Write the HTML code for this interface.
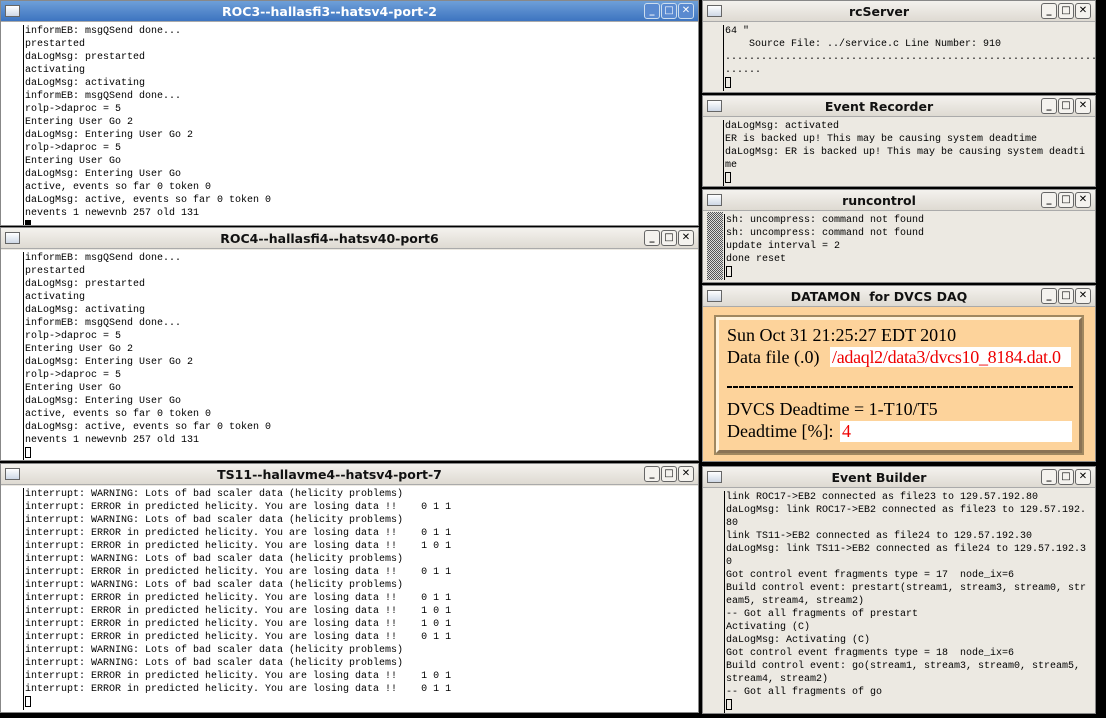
<!DOCTYPE html><html><head><style>
*{margin:0;padding:0;box-sizing:border-box}
body{width:1106px;height:718px;background:#000;position:relative;overflow:hidden;font-family:"Liberation Mono",monospace}
.w{position:absolute;background:#ece9e2;border:1px solid #888}
.t{position:absolute;left:0;right:0;top:0;height:21px;background:linear-gradient(#f4f2ee,#dedad2);font:bold 12.5px "DejaVu Sans",sans-serif;color:#111;line-height:21px;border-bottom:1px solid #aaa}
.t b{position:absolute;left:22px;right:62px;text-align:center}
.t.a{background:linear-gradient(#6e9fd8,#3d74c0);color:#fff}
.ic{position:absolute;left:4px;top:4px;width:15px;height:12px;border:1px solid #666;background:linear-gradient(#fff,#cfd8e6)}
.bt{position:absolute;top:2px;right:4px;display:flex;gap:1px}
.bt span{width:16px;height:16px;border:1px solid #666;border-radius:3px;background:#f4f2ee;font:bold 10px "DejaVu Sans",sans-serif;line-height:14px;text-align:center;color:#000}
.a .bt span{background:#5a8ad0;border-color:#cde;color:#fff}
.c{position:absolute;left:0;right:0;bottom:0;overflow:hidden}
.c pre{position:absolute;left:22px;top:2px;font:10px/13px "Liberation Mono",monospace;color:#000;border-left:1px solid #000;padding-left:1px;white-space:pre}
.sb{position:absolute;left:4px;top:0;bottom:0;width:16px}
.cur{display:inline-block;width:6px;height:11px;border:1px solid #000;vertical-align:-2px}
</style></head><body>

<div class="w" style="left:0;top:0;width:699px;height:226px;background:#fff">
<div class="t a"><div class="ic"></div><b>ROC3--hallasfi3--hatsv4-port-2</b><div class="bt"><span>_</span><span>□</span><span>✕</span></div></div>
<div class="c" style="top:22px;background:#fff"><pre>informEB: msgQSend done...
prestarted
daLogMsg: prestarted
activating
daLogMsg: activating
informEB: msgQSend done...
rolp->daproc = 5
Entering User Go 2
daLogMsg: Entering User Go 2
rolp->daproc = 5
Entering User Go
daLogMsg: Entering User Go
active, events so far 0 token 0
daLogMsg: active, events so far 0 token 0
nevents 1 newevnb 257 old 131
<span style="display:inline-block;width:6px;height:8px;background:#000"></span></pre></div></div>

<div class="w" style="left:0;top:227px;width:699px;height:234px">
<div class="t"><div class="ic"></div><b>ROC4--hallasfi4--hatsv40-port6</b><div class="bt"><span>_</span><span>□</span><span>✕</span></div></div>
<div class="c" style="top:22px;background:#fff"><pre>informEB: msgQSend done...
prestarted
daLogMsg: prestarted
activating
daLogMsg: activating
informEB: msgQSend done...
rolp->daproc = 5
Entering User Go 2
daLogMsg: Entering User Go 2
rolp->daproc = 5
Entering User Go
daLogMsg: Entering User Go
active, events so far 0 token 0
daLogMsg: active, events so far 0 token 0
nevents 1 newevnb 257 old 131
<span class="cur"></span></pre></div></div>

<div class="w" style="left:0;top:463px;width:699px;height:250px">
<div class="t"><div class="ic"></div><b>TS11--hallavme4--hatsv4-port-7</b><div class="bt"><span>_</span><span>□</span><span>✕</span></div></div>
<div class="c" style="top:22px;background:#fff"><pre>interrupt: WARNING: Lots of bad scaler data (helicity problems)
interrupt: ERROR in predicted helicity. You are losing data !!    0 1 1
interrupt: WARNING: Lots of bad scaler data (helicity problems)
interrupt: ERROR in predicted helicity. You are losing data !!    0 1 1
interrupt: ERROR in predicted helicity. You are losing data !!    1 0 1
interrupt: WARNING: Lots of bad scaler data (helicity problems)
interrupt: ERROR in predicted helicity. You are losing data !!    0 1 1
interrupt: WARNING: Lots of bad scaler data (helicity problems)
interrupt: ERROR in predicted helicity. You are losing data !!    0 1 1
interrupt: ERROR in predicted helicity. You are losing data !!    1 0 1
interrupt: ERROR in predicted helicity. You are losing data !!    1 0 1
interrupt: ERROR in predicted helicity. You are losing data !!    0 1 1
interrupt: WARNING: Lots of bad scaler data (helicity problems)
interrupt: WARNING: Lots of bad scaler data (helicity problems)
interrupt: ERROR in predicted helicity. You are losing data !!    1 0 1
interrupt: ERROR in predicted helicity. You are losing data !!    0 1 1
<span class="cur"></span></pre></div></div>

<div class="w" style="left:702px;top:0;width:394px;height:93px">
<div class="t"><div class="ic"></div><b>rcServer</b><div class="bt"><span>_</span><span>□</span><span>✕</span></div></div>
<div class="c" style="top:22px"><pre style="left:20px">64 "
    Source File: ../service.c Line Number: 910
..............................................................
......
<span class="cur"></span></pre></div></div>

<div class="w" style="left:702px;top:95px;width:394px;height:92px">
<div class="t"><div class="ic"></div><b>Event Recorder</b><div class="bt"><span>_</span><span>□</span><span>✕</span></div></div>
<div class="c" style="top:22px"><pre style="left:20px">daLogMsg: activated
ER is backed up! This may be causing system deadtime
daLogMsg: ER is backed up! This may be causing system deadti
me
<span class="cur"></span></pre></div></div>

<div class="w" style="left:702px;top:189px;width:394px;height:94px">
<div class="t"><div class="ic"></div><b>runcontrol</b><div class="bt"><span>_</span><span>□</span><span>✕</span></div></div>
<div class="c" style="top:22px"><div class="sb" style="top:0;height:68px;background:repeating-conic-gradient(#555 0 25%,#ddd 0 50%) 0 0/2px 2px"></div><pre style="left:21px">sh: uncompress: command not found
sh: uncompress: command not found
update interval = 2
done reset
<span class="cur"></span></pre></div></div>

<div class="w" style="left:702px;top:285px;width:394px;height:177px;background:#fdd39b">
<div class="t"><div class="ic"></div><b>DATAMON &nbsp;for DVCS DAQ</b><div class="bt"><span>_</span><span>□</span><span>✕</span></div></div>
<div style="position:absolute;left:13px;top:31px;width:366px;height:136px;border:3px solid;border-color:#fff3dc #8a7355 #8a7355 #fff3dc;outline:2px solid #a08860;font:18px/22px 'Liberation Serif',serif;color:#000">
<div style="position:absolute;left:8px;top:4px">Sun Oct 31 21:25:27 EDT 2010</div>
<div style="position:absolute;left:8px;top:26px">Data file (.0)</div>
<div style="position:absolute;left:111px;top:27px;width:241px;height:20px;background:#fff;color:#e00;line-height:20px;padding-left:2px;letter-spacing:-0.3px">/adaql2/data3/dvcs10_8184.dat.0</div>
<div style="position:absolute;left:8px;top:66px;width:346px;height:2px;background:repeating-linear-gradient(90deg,#000 0 5px,transparent 5px 6px)"></div>
<div style="position:absolute;left:8px;top:78px">DVCS Deadtime = 1-T10/T5</div>
<div style="position:absolute;left:8px;top:100px">Deadtime [%]:</div>
<div style="position:absolute;left:121px;top:101px;width:232px;height:21px;background:#fff;color:#e00;line-height:21px;padding-left:2px">4</div>
</div></div>

<div class="w" style="left:702px;top:466px;width:394px;height:248px">
<div class="t"><div class="ic"></div><b>Event Builder</b><div class="bt"><span>_</span><span>□</span><span>✕</span></div></div>
<div class="c" style="top:22px"><pre style="left:21px">link ROC17->EB2 connected as file23 to 129.57.192.80
daLogMsg: link ROC17->EB2 connected as file23 to 129.57.192.
80
link TS11->EB2 connected as file24 to 129.57.192.30
daLogMsg: link TS11->EB2 connected as file24 to 129.57.192.3
0
Got control event fragments type = 17  node_ix=6
Build control event: prestart(stream1, stream3, stream0, str
eam5, stream4, stream2)
-- Got all fragments of prestart
Activating (C)
daLogMsg: Activating (C)
Got control event fragments type = 18  node_ix=6
Build control event: go(stream1, stream3, stream0, stream5,
stream4, stream2)
-- Got all fragments of go
<span class="cur"></span></pre></div></div>
</body></html>
